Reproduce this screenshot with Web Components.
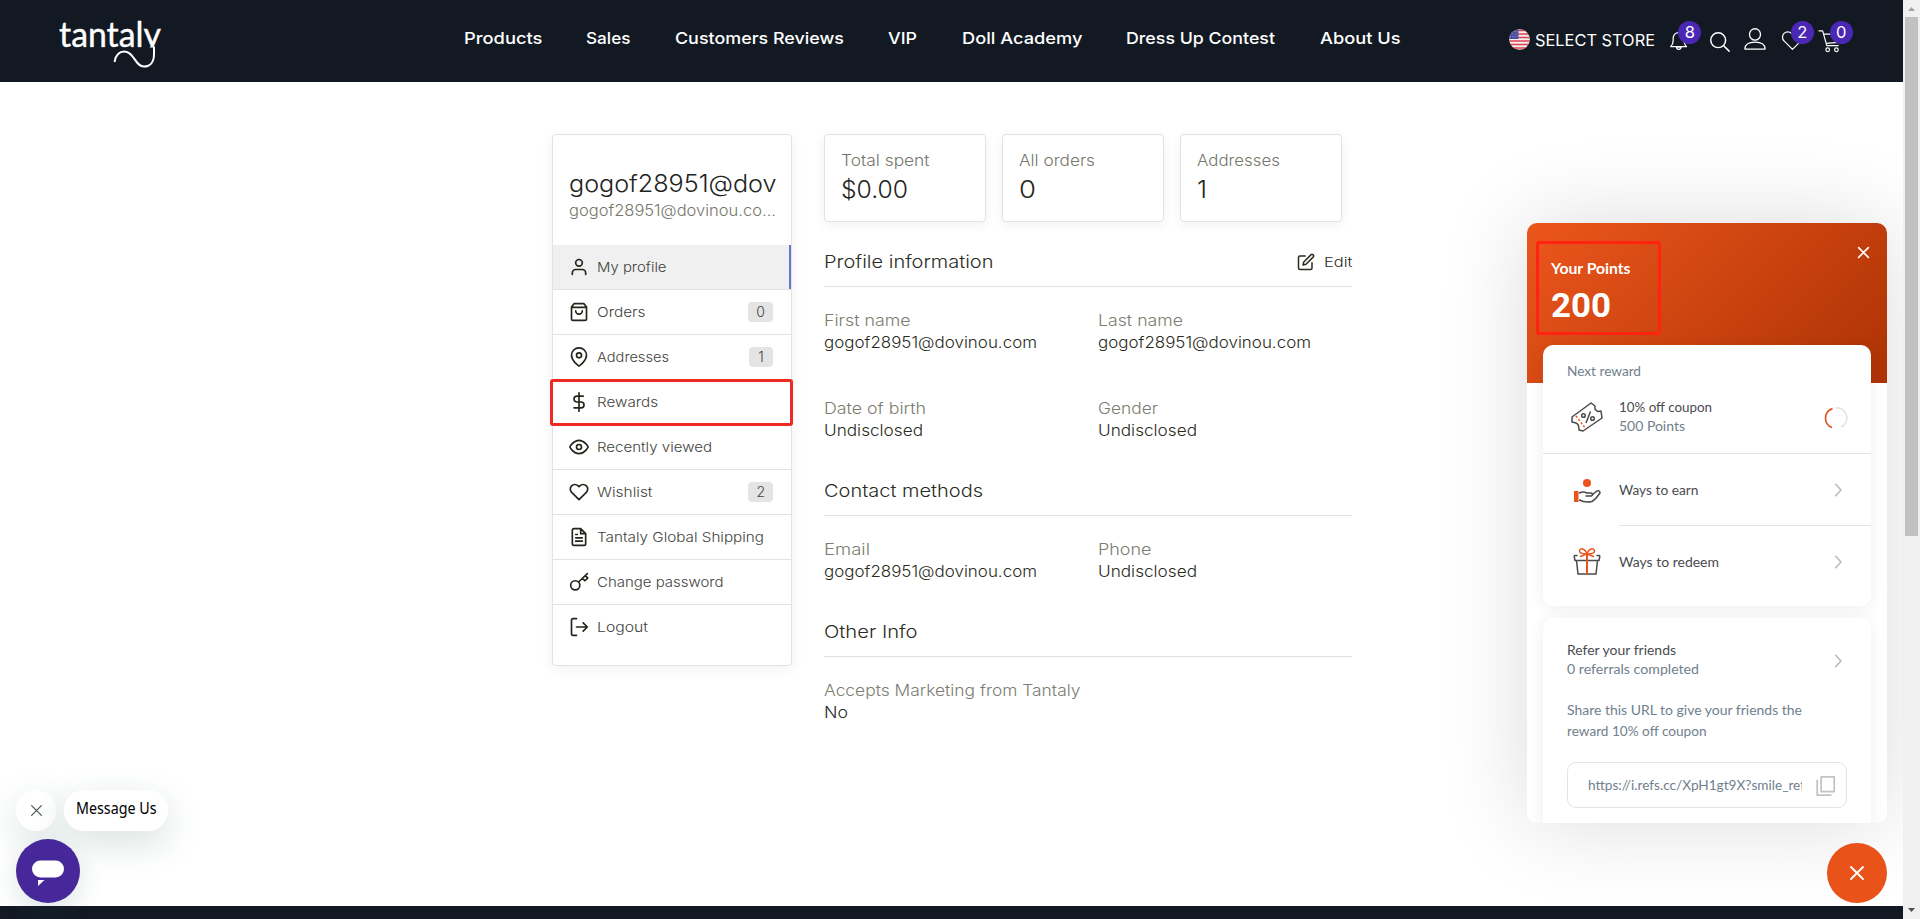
<!DOCTYPE html>
<html lang="en">
<head>
<meta charset="utf-8">
<title>Tantaly - My profile</title>
<style>
    html, body {
        margin:0;
        height:100%;
        overflow:hidden;
    }

    body {
        font-family:Inter, "Liberation Sans", sans-serif;
        font-size:15.5px;
        font-weight:300;
        color:#2a2c22;
        background:#fff;
    }
</style>
</head>
<body>
<store-page></store-page>

<script>
const icons = {
    user: '<path d="M20 21v-2a4 4 0 0 0-4-4H8a4 4 0 0 0-4 4v2"/><circle cx="12" cy="7" r="4"/>',
    bag: '<path d="M3 6l3-4h12l3 4v14a2 2 0 0 1-2 2H5a2 2 0 0 1-2-2zM3 6.5h18M16 10.5a4 4 0 0 1-8 0"/>',
    pin: '<path d="M21 10c0 7-9 13-9 13s-9-6-9-13a9 9 0 0 1 18 0z"/><circle cx="12" cy="10" r="3"/>',
    dollar: '<path d="M12 1v22M17 5H9.5a3.5 3.5 0 0 0 0 7h5a3.5 3.5 0 0 1 0 7H6"/>',
    eye: '<path d="M1 12s4-8 11-8 11 8 11 8-4 8-11 8-11-8-11-8z"/><circle cx="12" cy="12" r="3"/>',
    heart: '<path d="M20.84 4.61a5.5 5.5 0 0 0-7.78 0L12 5.67l-1.06-1.06a5.5 5.5 0 0 0-7.78 7.78L12 21.23l8.84-8.84a5.5 5.5 0 0 0 0-7.78z"/>',
    file: '<path d="M14 2H6a2 2 0 0 0-2 2v16a2 2 0 0 0 2 2h12a2 2 0 0 0 2-2V8zM14 2v6h6M16 13H8M16 17H8M10 9H8"/>',
    key: '<circle cx="7.5" cy="16" r="5.5"/><path d="M11.5 12L22 2M16 7.5l3 3 3.5-3.2-2.8-3"/>',
    logout: '<path d="M9 22H5a2 2 0 0 1-2-2V4a2 2 0 0 1 2-2h4M17 17l5-5-5-5M22 12H9"/>',
    edit: '<path d="M11 4H4a2 2 0 0 0-2 2v14a2 2 0 0 0 2 2h14a2 2 0 0 0 2-2v-7"/><path d="M18.5 2.5a2.12 2.12 0 0 1 3 3L12 15l-4 1 1-4z"/>',
    cross: '<path d="M3 3l18 18M21 3L3 21"/>',
    chevron: '<path d="M8 2l9 10-9 10"/>',
    bell: '<path d="M2 20h19c-2-2-3-4-3-7v-3c0-4-3-7-6.500-7S5 6 5 10v3c0 3-1 5-3 7zM9 20.500c0 3.500 5.500 3.500 5.500 0z"/>',
    search: '<circle cx="10.500" cy="10.500" r="8.500"/><path d="M16.500 16.500L23 23"/>',
    person: '<ellipse cx="12" cy="7" rx="6" ry="6.200"/><path d="M1 23c0-5 4-7.500 11-7.500S23 18 23 23z"/>',
    cart: '<path d="M0 1h4l4.500 16H21M5 4.500h18l-2 9-13 1"/><circle cx="9.500" cy="21.500" r="2"/><circle cx="19" cy="21.500" r="2"/>',
    copy: '<path d="M7 2h15v17H7zM2.500 6v17H18"/>',
};

// base class, keeps every shadow root open and rendered the same way
class BaseElement extends HTMLElement {
    constructor() {
        super();
        this.attachShadow({ mode: "open" });
    }

    connectedCallback() {
        this.shadowRoot.innerHTML = this.template();
    }
}

class SvgIcon extends BaseElement {
    template() {
        const size = this.getAttribute("size") || 20;
        const stroke = this.getAttribute("stroke") || 2;
        return `
            <style>
                :host { display:block; flex:none; width:${size}px; height:${size}px; }
                svg { display:block; overflow:visible; }
            </style>
            <svg width="${size}" height="${size}" viewBox="0 0 24 24" fill="none" stroke="currentColor"
                stroke-width="${stroke}" stroke-linecap="round" stroke-linejoin="round">${icons[this.getAttribute("name")]}</svg>
        `;
    }
}

// one line of text, stretched so that it spans the given width
class FitText extends BaseElement {
    template() {
        return `
            <style>
                :host { display:inline-block; white-space:nowrap; }
                span { display:inline-block; transform-origin:0 50%; }
            </style>
            <span><slot></slot></span>
        `;
    }

    connectedCallback() {
        super.connectedCallback();
        const width = Number(this.getAttribute("w"));
        const span = this.shadowRoot.querySelector("span");
        const natural = span.getBoundingClientRect().width;
        span.style.transform = `scaleX(${width / natural})`;
        this.style.width = `${width}px`;
    }
}

class BrandLogo extends BaseElement {
    template() {
        return `
            <style>
                :host { display:block; width:102px; height:50px; }
                svg { display:block; overflow:visible; }
                text { font-family:Lato, sans-serif; font-size:35px; font-weight:400; fill:#fff; stroke:#fff; stroke-width:.4px; }
            </style>
            <svg width="102" height="50" viewBox="0 0 102 50">
                <clipPath id="base"><rect x="-2" width="106" height="29.500"/></clipPath>
                <text x="-1" y="28.500" textLength="102" lengthAdjust="spacingAndGlyphs" clip-path="url(#base)">tantaly</text>
                <path d="M94 28.500V36C94 44 90 48.500 84 48.500C75 48.500 74 33.500 64.500 33.500C58 33.500 55.500 38 54.500 44" fill="none" stroke="#fff" stroke-width="2"/>
            </svg>
        `;
    }
}

class CountBadge extends BaseElement {
    template() {
        return `
            <style>
                :host {
                    position:absolute;
                    left:var(--x);
                    top:var(--y);
                    width:23px;
                    height:23px;
                    border-radius:50%;
                    background:#4a28b4;
                    color:#fff;
                    font-size:16.500px;
                    font-weight:400;
                    line-height:23px;
                    text-align:center;
                }
            </style>
            <slot></slot>
        `;
    }
}

class SiteHeader extends BaseElement {
    template() {
        return `
            <style>
                :host {
                    display:flex;
                    align-items:flex-start;
                    height:82px;
                    box-sizing:border-box;
                    padding:18px 0 0 60px;
                    background:#131923;
                    color:#fff;
                }
                nav { display:flex; gap:44.300px; margin:10px 0 0 301.500px; font-size:16.500px; font-weight:500; line-height:20px; }
                .tools { display:flex; margin:12px 0 0 108.500px; font-weight:400; }
                .store { display:flex; gap:5px; font-size:16.500px; line-height:21px; margin-right:14px; }
                .tool { position:relative; margin-right:var(--gap); }
                .flag { margin-top:-1px; }
            </style>
            <brand-logo></brand-logo>
            <nav>
                <fit-text w="78.500">Products</fit-text>
                <fit-text w="44.500">Sales</fit-text>
                <fit-text w="169">Customers Reviews</fit-text>
                <fit-text w="29">VIP</fit-text>
                <fit-text w="120.500">Doll Academy</fit-text>
                <fit-text w="149">Dress Up Contest</fit-text>
                <fit-text w="80.500">About Us</fit-text>
            </nav>
            <div class="tools">
                <div class="store">
                    <svg class="flag" width="21" height="21" viewBox="0 0 21 21">
                        <clipPath id="round"><circle cx="10.500" cy="10.500" r="10.300"/></clipPath>
                        <g clip-path="url(#round)">
                            <rect width="21" height="21" fill="#f3eef0"/>
                            <path d="M0 1.500h21M0 5h21M0 8.500h21M0 12h21M0 15.500h21M0 19h21" stroke="#e0404c" stroke-width="1.700"/>
                            <rect width="9.500" height="10" fill="#4a4f9e"/>
                            <path d="M1 2.500h8M1 5h8M1 7.500h8" stroke="#8d90c4" stroke-width=".8" stroke-dasharray="1 1.200"/>
                        </g>
                    </svg>
                    <fit-text w="120">SELECT STORE</fit-text>
                </div>
                <div class="tool" style="--gap:20px"><svg-icon name="bell" size="20" stroke="1.500"></svg-icon><count-badge style="--x:9.500px;--y:-9px">8</count-badge></div>
                <div class="tool" style="--gap:14.500px"><svg-icon name="search" size="21" stroke="1.700" style="margin-top:1px"></svg-icon></div>
                <div class="tool" style="--gap:14.500px"><svg-icon name="person" size="22" stroke="1.400" style="margin-top:-2px"></svg-icon></div>
                <div class="tool" style="--gap:15px"><svg-icon name="heart" size="23" stroke="1.300" style="margin-top:-1px"></svg-icon><count-badge style="--x:10px;--y:-9px">2</count-badge></div>
                <div class="tool"><svg-icon name="cart" size="22" stroke="1.300"></svg-icon><count-badge style="--x:11px;--y:-9px">0</count-badge></div>
            </div>
        `;
    }
}

class MenuItem extends BaseElement {
    template() {
        const count = this.getAttribute("count");
        return `
            <style>
                :host {
                    display:flex;
                    align-items:center;
                    height:45px;
                    box-sizing:border-box;
                    padding:0 18px 0 16px;
                    border-bottom:1px solid #e2e2e2;
                    position:relative;
                    font-size:13.500px;
                    color:#42433c;
                }
                :host([active]) { background:#f0f0f0; box-shadow:inset -2px 0 #6376cc; }
                :host([last]) { border-bottom-color:transparent; }
                /* red frame lies over the row and the card's border */
                :host([marked])::after {
                    content:"";
                    position:absolute;
                    inset:-1px -2px -2px -3px;
                    border:3px solid #ee2a22;
                    border-radius:3px;
                }
                svg-icon { color:#23241a; margin-right:7.500px; }
                .count {
                    margin-left:auto;
                    min-width:8px;
                    padding:0 8px;
                    background:#e4e4e4;
                    border-radius:4px;
                    line-height:20px;
                    font-size:14px;
                    text-align:center;
                }
            </style>
            <svg-icon name="${this.getAttribute("icon")}" size="20"></svg-icon>
            <fit-text w="${this.getAttribute("w")}">${this.getAttribute("label")}</fit-text>
            ${count ? `<span class="count">${count}</span>` : ""}
        `;
    }
}

class AccountMenu extends BaseElement {
    template() {
        return `
            <style>
                :host {
                    display:block;
                    width:240px;
                    height:532px;
                    box-sizing:border-box;
                    border:1px solid #e2e2e2;
                    border-radius:4px;
                    box-shadow:0 3px 14px rgba(0,0,0,.06);
                    background:#fff;
                }
                .who { height:110px; padding:35px 0 0 15.500px; box-sizing:border-box; }
                .who fit-text { display:block; }
                .name { font-size:23.500px; line-height:28px; color:#22231b; }
                .mail { font-size:15.500px; line-height:25px; color:#76776b; }
            </style>
            <div class="who">
                <fit-text class="name" w="207.500">gogof28951@dov</fit-text>
                <fit-text class="mail" w="207">gogof28951@dovinou.co...</fit-text>
            </div>
            <menu-item icon="user" label="My profile" w="69.500" active></menu-item>
            <menu-item icon="bag" label="Orders" w="48.500" count="0"></menu-item>
            <menu-item icon="pin" label="Addresses" w="72" count="1"></menu-item>
            <menu-item icon="dollar" label="Rewards" w="61" marked></menu-item>
            <menu-item icon="eye" label="Recently viewed" w="115"></menu-item>
            <menu-item icon="heart" label="Wishlist" w="55.500" count="2"></menu-item>
            <menu-item icon="file" label="Tantaly Global Shipping" w="167"></menu-item>
            <menu-item icon="key" label="Change password" w="126.500"></menu-item>
            <menu-item icon="logout" label="Logout" w="51" last></menu-item>
        `;
    }
}

class StatCard extends BaseElement {
    template() {
        return `
            <style>
                :host {
                    display:block;
                    width:162px;
                    height:88px;
                    box-sizing:border-box;
                    padding:14px 15.500px;
                    border:1px solid #e2e2e2;
                    border-radius:4px;
                    box-shadow:0 3px 12px rgba(0,0,0,.06);
                }
                fit-text { display:block; }
                .label { line-height:24px; color:#76776b; }
                .value { font-size:23.500px; line-height:34px; color:#22231b; }
            </style>
            <fit-text class="label" w="${this.getAttribute("w")}">${this.getAttribute("label")}</fit-text>
            <fit-text class="value" w="${this.getAttribute("vw")}">${this.getAttribute("value")}</fit-text>
        `;
    }
}

class InfoField extends BaseElement {
    template() {
        return `
            <style>
                :host { display:block; width:274px; line-height:22px; }
                fit-text { display:block; }
                .label { color:#7c7d71; }
            </style>
            <fit-text class="label" w="${this.getAttribute("w")}">${this.getAttribute("label")}</fit-text>
            <fit-text w="${this.getAttribute("vw")}">${this.getAttribute("value")}</fit-text>
        `;
    }
}

class InfoSection extends BaseElement {
    template() {
        return `
            <style>
                :host { display:block; width:528px; }
                .head {
                    display:flex;
                    justify-content:space-between;
                    align-items:center;
                    height:50px;
                    box-sizing:border-box;
                    border-bottom:1px solid #e0e0e0;
                    font-size:17.500px;
                }
                .grid { display:grid; grid-template-columns:274px auto; row-gap:44px; padding-top:23px; }
            </style>
            <div class="head">
                <fit-text w="${this.getAttribute("w")}">${this.getAttribute("label")}</fit-text>
                <slot name="action"></slot>
            </div>
            <div class="grid"><slot></slot></div>
        `;
    }
}

class EditLink extends BaseElement {
    template() {
        return `
            <style>
                :host { display:flex; align-items:center; gap:9px; font-size:13.500px; }
            </style>
            <svg-icon name="edit" size="18"></svg-icon>
            <fit-text w="28.500">Edit</fit-text>
        `;
    }
}

class ProfileMain extends BaseElement {
    template() {
        return `
            <style>
                :host { display:block; }
                .stats { display:flex; gap:16px; margin-bottom:15px; }
                info-section + info-section { margin-top:24px; }
            </style>
            <div class="stats">
                <stat-card label="Total spent" w="88.500" value="$0.00" vw="67"></stat-card>
                <stat-card label="All orders" w="76" value="0" vw="17"></stat-card>
                <stat-card label="Addresses" w="83" value="1" vw="10"></stat-card>
            </div>
            <info-section label="Profile information" w="169.500">
                <edit-link slot="action"></edit-link>
                <info-field label="First name" w="86.500" value="gogof28951@dovinou.com" vw="213"></info-field>
                <info-field label="Last name" w="85" value="gogof28951@dovinou.com" vw="213"></info-field>
                <info-field label="Date of birth" w="102" value="Undisclosed" vw="99"></info-field>
                <info-field label="Gender" w="60" value="Undisclosed" vw="99"></info-field>
            </info-section>
            <info-section label="Contact methods" w="159">
                <info-field label="Email" w="46" value="gogof28951@dovinou.com" vw="213"></info-field>
                <info-field label="Phone" w="53.500" value="Undisclosed" vw="99"></info-field>
            </info-section>
            <info-section label="Other Info" w="93.500">
                <info-field label="Accepts Marketing from Tantaly" w="256.500" value="No" vw="24"></info-field>
            </info-section>
        `;
    }
}

class PointsHeader extends BaseElement {
    template() {
        return `
            <style>
                :host {
                    display:flex;
                    justify-content:space-between;
                    align-items:flex-start;
                    height:160px;
                    box-sizing:border-box;
                    padding:17.500px 17.500px 0 9px;
                    background:linear-gradient(135deg, #ec561c, #ad3204);
                    color:#fff;
                }
                .points {
                    display:flex;
                    flex-direction:column;
                    align-items:flex-start;
                    width:125px;
                    height:94px;
                    box-sizing:border-box;
                    padding:14px 0 0 12px;
                    border:3px solid #ff2312;
                    border-radius:3px;
                    font-family:Lato, sans-serif;
                }
                .title { font-size:15.500px; font-weight:700; line-height:20px; }
                .total { font-family:Roboto, sans-serif; font-size:33px; font-weight:700; line-height:40px; margin-top:8px; }
                svg-icon { margin-top:5.500px; }
            </style>
            <div class="points">
                <fit-text class="title" w="79.500">Your Points</fit-text>
                <fit-text class="total" w="60">200</fit-text>
            </div>
            <svg-icon name="cross" size="13" stroke="3"></svg-icon>
        `;
    }
}

class RewardRow extends BaseElement {
    template() {
        return `
            <style>
                :host { display:flex; align-items:center; height:72px; padding-left:24px; }
                .body {
                    flex:1;
                    display:flex;
                    align-items:center;
                    justify-content:space-between;
                    height:100%;
                    box-sizing:border-box;
                    margin-left:12px;
                    padding-right:26px;
                    border-bottom:1px solid transparent;
                }
                :host([line]) .body { border-bottom-color:#e2e3e4; }
                .pic { width:40px; height:40px; }
                svg-icon { color:#b4b6b8; }
            </style>
            <div class="pic"><slot name="pic"></slot></div>
            <div class="body"><slot></slot><svg-icon name="chevron" size="14" stroke="2.400"></svg-icon></div>
        `;
    }
}

class PointsPanel extends BaseElement {
    template() {
        return `
            <style>
                :host {
                    display:block;
                    width:360px;
                    height:600px;
                    border-radius:10px;
                    overflow:hidden;
                    background:#fff;
                    box-shadow:0 0 90px rgba(0,0,0,.14);
                    font-family:Lato, sans-serif;
                    font-size:13.500px;
                    font-weight:400;
                    color:#4a4b4f;
                }
                svg { display:block; }
                .cards { display:flex; flex-direction:column; gap:12px; margin:-38px 16px 0; position:relative; }
                .card { border-radius:10px; background:#fff; box-shadow:0 2px 16px rgba(0,0,0,.07); }
                .grey { color:#70808d; }
                .next { height:109px; box-sizing:border-box; padding:17px 24px 0; border-bottom:1px solid #e2e3e4; line-height:19px; }
                .coupon { display:flex; align-items:center; margin-top:17px; }
                .coupon div { display:flex; flex-direction:column; flex:1; margin-left:12px; }
                .ring { position:relative; left:1px; top:1px; }
                .top { height:261px; }
                .refer { height:300px; padding:23px 24px 0; box-sizing:border-box; }
                .friends { display:flex; justify-content:space-between; align-items:center; line-height:19px; padding-right:2px; }
                .friends div, .share { display:flex; flex-direction:column; }
                .friends svg-icon { color:#b4b6b8; margin-top:2px; }
                .share { margin-top:21px; line-height:21px; }
                .url {
                    display:flex;
                    align-items:center;
                    justify-content:space-between;
                    height:46px;
                    box-sizing:border-box;
                    margin-top:20px;
                    padding:0 10.500px 0 20px;
                    border:1px solid #e3e4e6;
                    border-radius:9px;
                }
                .url div { width:214px; overflow:hidden; }
                .url svg-icon { color:#c3c3c3; }
            </style>
            <points-header></points-header>
            <div class="cards">
                <div class="card top">
                    <div class="next">
                        <fit-text class="grey" w="74">Next reward</fit-text>
                        <div class="coupon">
                            <svg width="40" height="38" viewBox="0 0 40 38" fill="none" stroke="#4a4a4a" stroke-width="1.500" stroke-linejoin="round">
                                <path d="M5 19L24 5L28 8Q27 12 31 13.500L34 13L35 20L16 33L12 32Q12 26 9 25L5 24Z"/>
                                <path d="M9 18L19 31" stroke="#e8531a" stroke-dasharray="2 2"/>
                                <path d="M23.500 13.500L19 25"/><circle cx="16.500" cy="17.500" r="1.800"/><circle cx="25.500" cy="20.500" r="1.800"/>
                            </svg>
                            <div>
                                <fit-text w="93">10% off coupon</fit-text>
                                <fit-text class="grey" w="66">500 Points</fit-text>
                            </div>
                            <svg class="ring" width="24" height="24" viewBox="0 0 24 24" fill="none" stroke-width="1.700">
                                <path d="M11.500 2A10 10 0 0 1 17 21" stroke="#e4e4e4"/>
                                <path d="M8.500 2.600A10 10 0 0 0 8 21.500" stroke="#e0521f"/>
                            </svg>
                        </div>
                    </div>
                    <reward-row line>
                        <svg slot="pic" width="40" height="40" viewBox="0 0 40 40">
                            <circle cx="20" cy="13" r="4" fill="#ea541a"/>
                            <rect x="7" y="21" width="4.500" height="11" fill="#ea541a"/>
                            <path d="M12.500 23C16 21 18 22 20 23H24Q27 24 24.500 26H19M25 25L30 21Q33 20 33 23Q29 29 25 31.500Q18 33 12.500 30" fill="none" stroke="#4a4a4a" stroke-width="1.500" stroke-linecap="round"/>
                        </svg>
                        <fit-text w="79.500">Ways to earn</fit-text>
                    </reward-row>
                    <reward-row>
                        <svg slot="pic" width="40" height="40" viewBox="0 0 40 40" fill="none" stroke-width="1.500" stroke-linecap="round">
                            <path d="M10 13.500H8Q7 13.500 7.300 15L8 18.500H32L32.700 15Q33 13.500 32 13.500H30M9.500 18.500L11 32H29L30.500 18.500" stroke="#4a4a4a"/>
                            <path d="M20 12C18 6 13 5.500 12.500 9C12.500 12 17 12 20 12C23 12 27.500 12 27.500 9C27 5.500 22 6 20 12L13.500 14.500M20 12L26.500 14.500" stroke="#ea541a"/>
                            <path d="M20 12V31.500" stroke="#ea541a" stroke-width="2"/>
                        </svg>
                        <fit-text w="100">Ways to redeem</fit-text>
                    </reward-row>
                </div>
                <div class="card refer">
                    <div class="friends">
                        <div>
                            <fit-text w="109">Refer your friends</fit-text>
                            <fit-text class="grey" w="132">0 referrals completed</fit-text>
                        </div>
                        <svg-icon name="chevron" size="14" stroke="2.400"></svg-icon>
                    </div>
                    <div class="share grey">
                        <fit-text w="235">Share this URL to give your friends the</fit-text>
                        <fit-text w="139.500">reward 10% off coupon</fit-text>
                    </div>
                    <div class="url grey">
                        <div><fit-text w="217">https://i.refs.cc/XpH1gt9X?smile_ref</fit-text></div>
                        <svg-icon name="copy" size="21" stroke="2"></svg-icon>
                    </div>
                </div>
            </div>
        `;
    }
}

class ChatWidget extends BaseElement {
    template() {
        return `
            <style>
                :host {
                    display:flex;
                    flex-direction:column;
                    gap:8px;
                    font-family:"Noto Sans", "Open Sans", sans-serif;
                    font-size:15.500px;
                    font-weight:400;
                    color:#000;
                }
                .row { display:flex; gap:8px; }
                .close, .pill {
                    display:flex;
                    align-items:center;
                    justify-content:center;
                    height:41px;
                    border-radius:20px;
                    background:#fff;
                    box-shadow:0 12px 36px rgba(36,92,84,.18);
                }
                .close { width:40px; color:#4c5152; }
                .pill { width:104px; line-height:37px; align-items:flex-start; }
                .bubble {
                    display:flex;
                    align-items:center;
                    justify-content:center;
                    width:64px;
                    height:64px;
                    border-radius:50%;
                    background:#47289a;
                    box-shadow:0 8px 24px rgba(36,92,84,.16);
                }
            </style>
            <div class="row">
                <div class="close"><svg-icon name="cross" size="13" stroke="2.200"></svg-icon></div>
                <div class="pill"><fit-text w="80.500">Message Us</fit-text></div>
            </div>
            <div class="bubble">
                <svg width="32" height="30" viewBox="0 0 32 30" fill="#fff">
                    <rect y="4.500" width="32" height="17" rx="8.500"/>
                    <path d="M6 24h6.500l-6.500 6z"/>
                </svg>
            </div>
        `;
    }
}

class PageScrollbar extends BaseElement {
    template() {
        return `
            <style>
                :host {
                    display:flex;
                    flex-direction:column;
                    justify-content:space-between;
                    align-items:center;
                    width:17px;
                    background:#f0f0f0;
                }
                .thumb { width:13px; height:519px; background:#c1c1c1; margin-bottom:auto; }
                svg { display:block; }
            </style>
            <svg width="17" height="17"><path d="M5 11l3.500-4 3.500 4z" fill="#a3a3a3"/></svg>
            <div class="thumb"></div>
            <svg width="17" height="17"><path d="M5 6l3.500 4 3.500-4z" fill="#505050"/></svg>
        `;
    }
}

class StorePage extends BaseElement {
    template() {
        return `
            <style>
                :host { display:flex; width:1920px; height:919px; overflow:hidden; }
                .page { flex:1; display:flex; flex-direction:column; position:relative; overflow:hidden; }
                main { flex:1; display:flex; gap:32px; padding:52px 0 0 552px; }
                footer { height:13px; background:#131923; }
                /* floating widgets */
                points-panel { position:absolute; right:16px; top:223px; }
                chat-widget { position:absolute; left:16px; top:790px; }
                .fab {
                    position:absolute;
                    right:16px;
                    top:843px;
                    display:flex;
                    align-items:center;
                    justify-content:center;
                    width:60px;
                    height:60px;
                    border-radius:50%;
                    background:#e95218;
                    color:#fff;
                }
            </style>
            <div class="page">
                <site-header></site-header>
                <main>
                    <account-menu></account-menu>
                    <profile-main></profile-main>
                </main>
                <footer></footer>
                <points-panel></points-panel>
                <chat-widget></chat-widget>
                <div class="fab"><svg-icon name="cross" size="16" stroke="2.800"></svg-icon></div>
            </div>
            <page-scrollbar></page-scrollbar>
        `;
    }
}

customElements.define("store-page", StorePage);
customElements.define("page-scrollbar", PageScrollbar);
customElements.define("site-header", SiteHeader);
customElements.define("brand-logo", BrandLogo);
customElements.define("count-badge", CountBadge);
customElements.define("account-menu", AccountMenu);
customElements.define("menu-item", MenuItem);
customElements.define("profile-main", ProfileMain);
customElements.define("stat-card", StatCard);
customElements.define("info-section", InfoSection);
customElements.define("info-field", InfoField);
customElements.define("edit-link", EditLink);
customElements.define("points-panel", PointsPanel);
customElements.define("points-header", PointsHeader);
customElements.define("reward-row", RewardRow);
customElements.define("chat-widget", ChatWidget);
customElements.define("svg-icon", SvgIcon);
// measured on connect, so it comes after all of the elements that style it
customElements.define("fit-text", FitText);
</script>
</body>
</html>
